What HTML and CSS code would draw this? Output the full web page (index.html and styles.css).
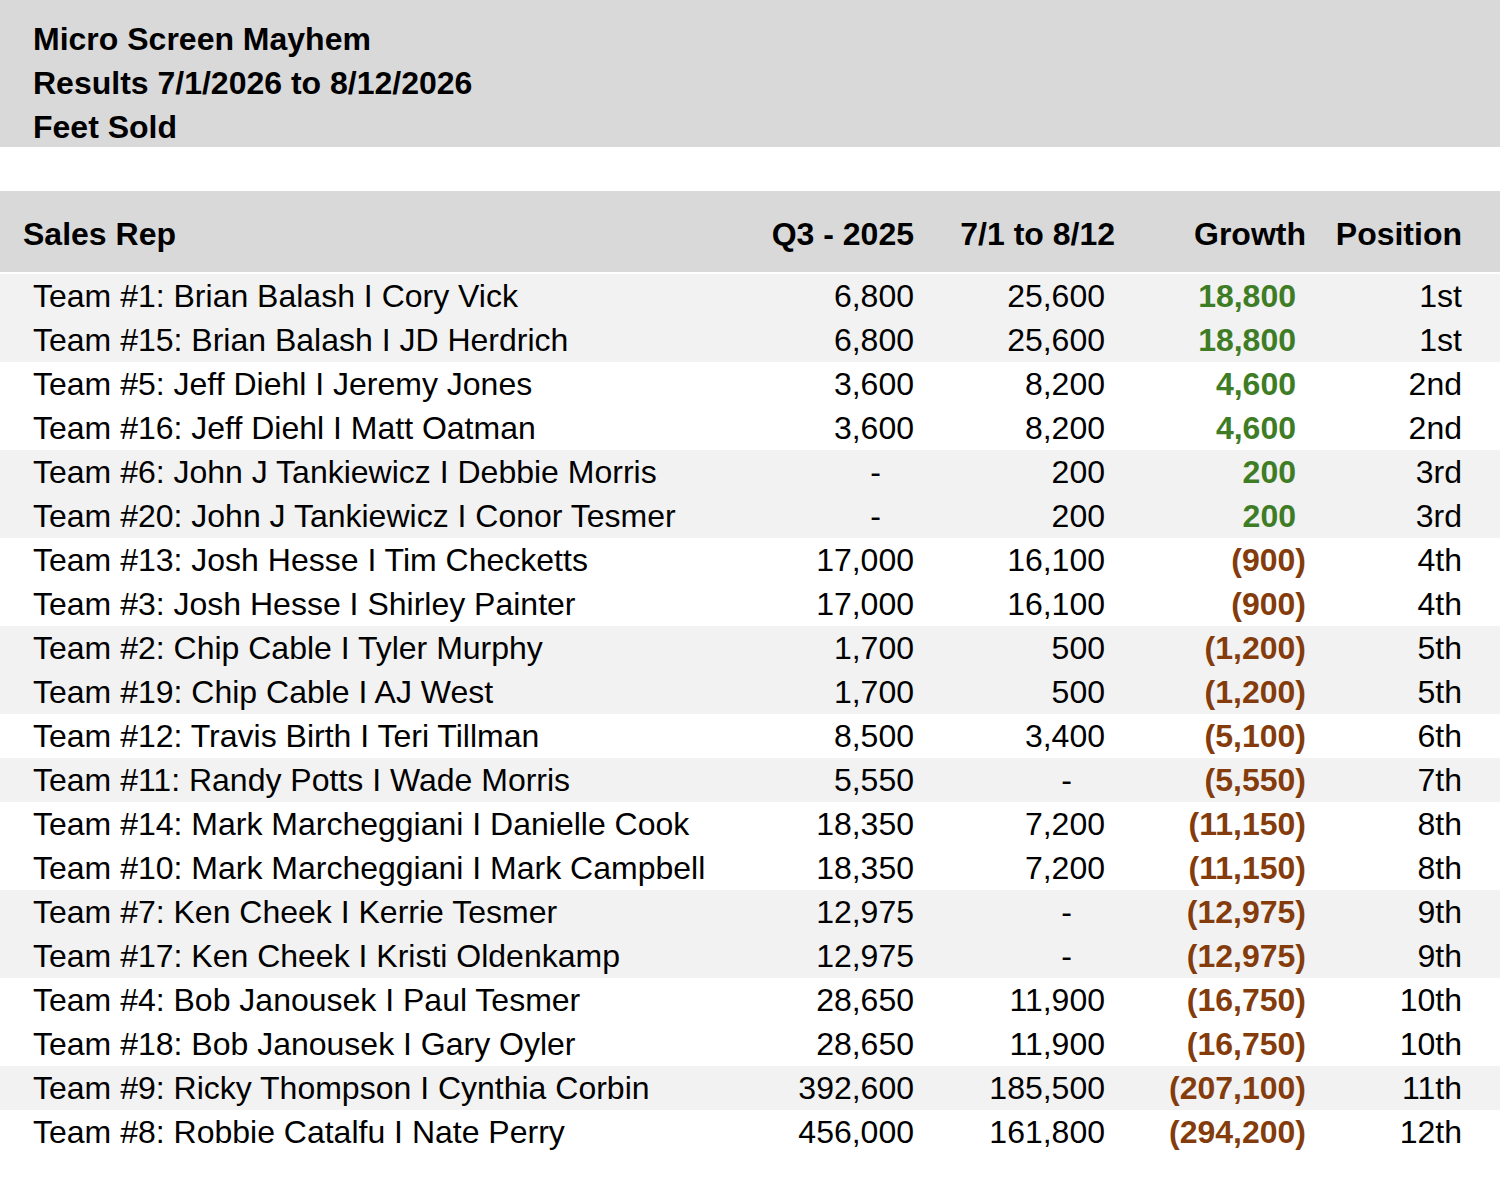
FILE: index.html
```html
<!DOCTYPE html>
<html lang="en">
<head>
<meta charset="utf-8">
<title>Micro Screen Mayhem</title>
<link rel="stylesheet" href="styles.css">
</head>
<body>
<header class="title-band">
  <div class="title-line">Micro Screen Mayhem</div>
  <div class="title-line">Results 7/1/2026 to 8/12/2026</div>
  <div class="title-line">Feet Sold</div>
</header>

<section class="table">
  <div class="head">
    <div class="cell name head-name">Sales Rep</div>
    <div class="cell num">Q3 - 2025</div>
    <div class="cell num"><span class="head-shift">7/1 to 8/12</span></div>
    <div class="cell num">Growth</div>
    <div class="cell num">Position</div>
  </div>

  <div class="body">
    <div class="row shade"><div class="cell name">Team #1: Brian Balash I Cory Vick</div><div class="cell num">6,800</div><div class="cell num">25,600</div><div class="cell num pos">18,800</div><div class="cell num">1st</div></div>
    <div class="row shade"><div class="cell name">Team #15: Brian Balash I JD Herdrich</div><div class="cell num">6,800</div><div class="cell num">25,600</div><div class="cell num pos">18,800</div><div class="cell num">1st</div></div>
    <div class="row"><div class="cell name">Team #5: Jeff Diehl I Jeremy Jones</div><div class="cell num">3,600</div><div class="cell num">8,200</div><div class="cell num pos">4,600</div><div class="cell num">2nd</div></div>
    <div class="row"><div class="cell name">Team #16: Jeff Diehl I Matt Oatman</div><div class="cell num">3,600</div><div class="cell num">8,200</div><div class="cell num pos">4,600</div><div class="cell num">2nd</div></div>
    <div class="row shade"><div class="cell name">Team #6: John J Tankiewicz I Debbie Morris</div><div class="cell num dash">-</div><div class="cell num">200</div><div class="cell num pos">200</div><div class="cell num">3rd</div></div>
    <div class="row shade"><div class="cell name">Team #20: John J Tankiewicz I Conor Tesmer</div><div class="cell num dash">-</div><div class="cell num">200</div><div class="cell num pos">200</div><div class="cell num">3rd</div></div>
    <div class="row"><div class="cell name">Team #13: Josh Hesse I Tim Checketts</div><div class="cell num">17,000</div><div class="cell num">16,100</div><div class="cell num neg">(900)</div><div class="cell num">4th</div></div>
    <div class="row"><div class="cell name">Team #3: Josh Hesse I Shirley Painter</div><div class="cell num">17,000</div><div class="cell num">16,100</div><div class="cell num neg">(900)</div><div class="cell num">4th</div></div>
    <div class="row shade"><div class="cell name">Team #2: Chip Cable I Tyler Murphy</div><div class="cell num">1,700</div><div class="cell num">500</div><div class="cell num neg">(1,200)</div><div class="cell num">5th</div></div>
    <div class="row shade"><div class="cell name">Team #19: Chip Cable I AJ West</div><div class="cell num">1,700</div><div class="cell num">500</div><div class="cell num neg">(1,200)</div><div class="cell num">5th</div></div>
    <div class="row"><div class="cell name">Team #12: Travis Birth I Teri Tillman</div><div class="cell num">8,500</div><div class="cell num">3,400</div><div class="cell num neg">(5,100)</div><div class="cell num">6th</div></div>
    <div class="row shade"><div class="cell name">Team #11: Randy Potts I Wade Morris</div><div class="cell num">5,550</div><div class="cell num dash">-</div><div class="cell num neg">(5,550)</div><div class="cell num">7th</div></div>
    <div class="row"><div class="cell name">Team #14: Mark Marcheggiani I Danielle Cook</div><div class="cell num">18,350</div><div class="cell num">7,200</div><div class="cell num neg">(11,150)</div><div class="cell num">8th</div></div>
    <div class="row"><div class="cell name">Team #10: Mark Marcheggiani I Mark Campbell</div><div class="cell num">18,350</div><div class="cell num">7,200</div><div class="cell num neg">(11,150)</div><div class="cell num">8th</div></div>
    <div class="row shade"><div class="cell name">Team #7: Ken Cheek I Kerrie Tesmer</div><div class="cell num">12,975</div><div class="cell num dash">-</div><div class="cell num neg">(12,975)</div><div class="cell num">9th</div></div>
    <div class="row shade"><div class="cell name">Team #17: Ken Cheek I Kristi Oldenkamp</div><div class="cell num">12,975</div><div class="cell num dash">-</div><div class="cell num neg">(12,975)</div><div class="cell num">9th</div></div>
    <div class="row"><div class="cell name">Team #4: Bob Janousek I Paul Tesmer</div><div class="cell num">28,650</div><div class="cell num">11,900</div><div class="cell num neg">(16,750)</div><div class="cell num">10th</div></div>
    <div class="row"><div class="cell name">Team #18: Bob Janousek I Gary Oyler</div><div class="cell num">28,650</div><div class="cell num">11,900</div><div class="cell num neg">(16,750)</div><div class="cell num">10th</div></div>
    <div class="row shade"><div class="cell name">Team #9: Ricky Thompson I Cynthia Corbin</div><div class="cell num">392,600</div><div class="cell num">185,500</div><div class="cell num neg">(207,100)</div><div class="cell num">11th</div></div>
    <div class="row"><div class="cell name">Team #8: Robbie Catalfu I Nate Perry</div><div class="cell num">456,000</div><div class="cell num">161,800</div><div class="cell num neg">(294,200)</div><div class="cell num">12th</div></div>
  </div>
</section>
</body>
</html>
```

FILE: styles.css
```css
html, body {
  margin: 0;
  padding: 0;
  background: #ffffff;
}

body {
  font-family: "Liberation Sans", Arial, Helvetica, sans-serif;
  color: #000000;
  width: 1500px;
}

.title-band {
  background: #d9d9d9;
  padding: 17px 0 0 33px;
  height: 130px;
}

.title-line {
  font-size: 32px;
  font-weight: 700;
  line-height: 44px;
}

.table {
  margin-top: 44px;
}

.head,
.row {
  display: grid;
  grid-template-columns: 720px 194px 191px 201px 156px;
  padding-right: 38px;
}

.head {
  background: #d9d9d9;
  height: 81px;
  box-sizing: border-box;
  padding-top: 23px;
  font-size: 32px;
  font-weight: 700;
  line-height: 40px;
}

.body {
  padding-top: 2px;
}

.row {
  font-size: 32px;
  line-height: 44px;
  height: 44px;
}

.row.shade {
  background: #f2f2f2;
}

.cell {
  white-space: nowrap;
}

.name {
  padding-left: 33px;
}

.head-name {
  padding-left: 23px;
}

.num {
  text-align: right;
}

.dash {
  padding-right: 33px;
}

.head-shift {
  margin-right: -10px;
}

.pos {
  color: #3e7d25;
  font-weight: 700;
  padding-right: 10px;
}

.neg {
  color: #843c0c;
  font-weight: 700;
}
```
